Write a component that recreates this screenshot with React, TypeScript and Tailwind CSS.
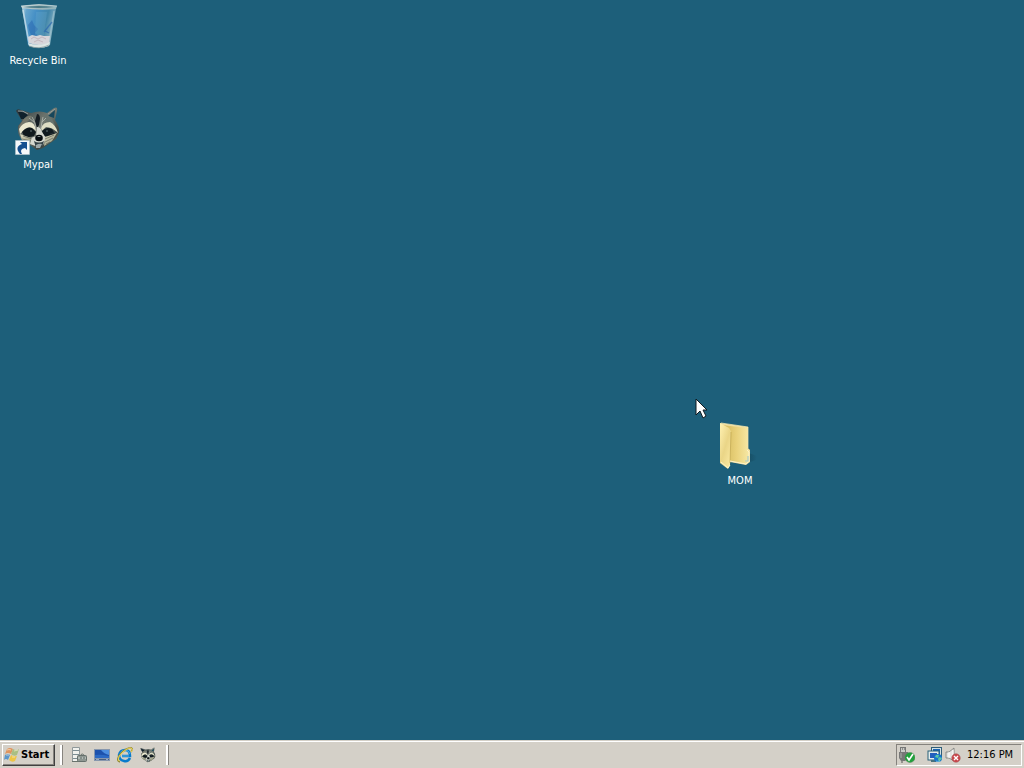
import React from "react";

function RecycleBinIcon() {
  return (
    <svg width="48" height="48" viewBox="0 0 48 48" aria-hidden="true">
      <defs>
        <linearGradient id="bin-glass" x1="0" x2="1" y1="0" y2="0.3">
          <stop offset="0" stopColor="#b9d6df" />
          <stop offset="0.14" stopColor="#65a5cd" />
          <stop offset="0.4" stopColor="#4690c6" />
          <stop offset="0.75" stopColor="#4186aa" />
          <stop offset="1" stopColor="#8ab4c2" />
        </linearGradient>
        <linearGradient id="bin-rim" x1="0" x2="1">
          <stop offset="0" stopColor="#c5d5d8" />
          <stop offset="0.5" stopColor="#9fb5b8" />
          <stop offset="1" stopColor="#8fb4bc" />
        </linearGradient>
      </defs>
      <path d="M8 4 L42 4 L36 41 Q25 46 14 41Z" fill="url(#bin-glass)" />
      <path d="M9 6 L15 39" stroke="#d8e8ec" strokeWidth="1.6" opacity=".7" />
      <path d="M40 7 L35 38" stroke="#b4d0d8" strokeWidth="1.3" opacity=".5" />
      <path d="M14 21 L18 16 L20 21 L24 25 L21 29 L25 32 L17 31 L15 26Z" fill="#235fae" opacity=".45" />
      <path d="M30 28 L38 18 M31 27 L35 29" stroke="#235fae" strokeWidth="1.3" opacity=".6" />
      <path d="M22 8 L33 8 L30 31 L21 31Z" fill="#8bc6e5" opacity=".15" />
      <path d="M14 33 L18 31 L22 32 L26 31 L30 32 L36 32 L35 39 Q25 43 15 39Z" fill="#d6d5da" />
      <path d="M17 35 L20 33 L24 35 L28 33 L32 35 M20 38 L24 36 L29 38" stroke="#bba9b1" strokeWidth=".7" fill="none" />
      <path d="M14 39 Q25 43 36 38 L35 42 Q25 46 15 42Z" fill="#dde6e4" />
      <path d="M15 42 Q25 46 35 41" stroke="#80979b" strokeWidth=".8" fill="none" />
      <path d="M7 2 Q25 -1 43 2 L42 5 Q25 7 8 4Z" fill="url(#bin-rim)" />
      <path d="M9 3 Q25 1 40 3 Q25 5 9 3Z" fill="#4a7b88" />
      <path d="M7 2 Q25 -1 43 2" stroke="#d1dfdf" strokeWidth=".7" fill="none" />
    </svg>
  );
}

function RaccoonIcon({ small = false }: { small?: boolean }) {
  return (
    <svg
      className={small ? "size-4" : "size-12 overflow-visible"}
      viewBox={small ? "2 1 44 46" : "0 0 48 48"}
      aria-hidden="true"
    >
      <defs>
        <linearGradient id="raccoon-coat" x2="1" y2="1">
          <stop stopColor="#2a353b" />
          <stop offset=".48" stopColor="#747b73" />
          <stop offset=".75" stopColor="#3b4542" />
          <stop offset="1" stopColor="#777a65" />
        </linearGradient>
        <linearGradient id="raccoon-cheek" x2=".8" y2="1">
          <stop stopColor="#e5e2c6" />
          <stop offset="1" stopColor="#8d8f75" />
        </linearGradient>
      </defs>
      <path d="M2 6 Q3 3 7 5 L17 8 Q26 5 33 8 L40 3 Q44 1 43 6 L41 15 Q46 22 45 28 L42 34 L35 39 L29 43 L23 45 L16 40 L8 35 Q3 29 4 21 L8 16Z" fill="url(#raccoon-coat)" />
      <path d="M4 7 Q8 6 14 10 L10 14 L7 14Z" fill="#10212c" />
      <path d="M41 5 L40 13 L34 11Z" fill="#17465b" />
      <path d="M4 6 Q9 5 14 9 M34 9 L41 4" stroke="#9aa3a0" strokeWidth=".9" fill="none" />
      <path d="M9 15 Q13 10 18 11 Q16 15 11 19 L6 26 L5 21Z" fill="#74776b" />
      <path d="M32 9 L38 14 L41 20 L35 17 L29 14Z" fill="#67736e" />
      <path d="M5 24 Q8 18 15 17 Q21 17 22 26 Q17 20 11 24 L6 29Z" fill="#eae8cf" />
      <path d="M27 23 Q29 17 36 17 Q42 20 44 28 Q38 22 32 22 L28 26Z" fill="#deddc4" />
      <path d="M23 9 Q26 9 26 14 L25 20 L23 23 L21 16Z" fill="#151d23" />
      <path d="M18 12 Q21 16 22 23 M29 12 Q28 16 27 23 M15 13 L20 17 M32 13 L28 17" stroke="#b7bbb2" strokeWidth=".8" fill="none" />
      <path d="M8 27 Q13 21 18 23 L22 27 L20 31 Q15 33 10 31Z" fill="#10191d" />
      <path d="M28 26 Q32 21 38 24 L41 29 L36 32 L30 31Z" fill="#111b20" />
      <path d="M23 22 Q27 22 28 27 L32 33 L29 40 L24 42 L16 39 L17 33 L22 31Z" fill="#d5d8cf" />
      <path d="M6 29 L17 33 L16 39 L8 35Z" fill="url(#raccoon-cheek)" />
      <path d="M31 32 L43 28 L38 36 L30 41Z" fill="url(#raccoon-cheek)" />
      <ellipse cx="25" cy="33" rx="3.8" ry="3.2" fill="#060c10" />
      <path d="M20 36 Q25 39 30 36 L28 42 L22 43Z" fill="#344044" />
      <path d="M22 40 Q25 38 28 39 L26 43 L22 43Z" fill="#9da8a8" />
      <circle cx="17" cy="26" r=".8" fill="#748486" />
      <circle cx="33" cy="26" r=".8" fill="#748486" />
      <ellipse cx="25" cy="31.5" rx="1.7" ry=".6" fill="#87908c" />
      <path d="M9 31 L18 34 M8 34 L17 36 M31 34 L40 30 M31 37 L39 33 M32 39 L36 37 M36 29 L43 27" stroke="#3a4142" strokeWidth=".5" />
      {!small && (
        <g>
          <path d="M1.5 35.5 H15.5 V49.5 H1.5Z" fill="#f5f8fa" stroke="#b2c2cb" strokeWidth=".6" />
          <path d="M6 49 Q0 42 8 39 L6 37 H13 V45 L11 43 Q5 44 8 49Z" fill="#164f8f" />
        </g>
      )}
    </svg>
  );
}

function FolderIcon() {
  return (
    <svg width="48" height="48" viewBox="0 0 48 48" aria-hidden="true">
      <defs>
        <linearGradient id="folder-back">
          <stop stopColor="#cfb657" />
          <stop offset=".55" stopColor="#ead27c" />
          <stop offset="1" stopColor="#f6e8a5" />
        </linearGradient>
        <linearGradient id="folder-front" x2=".8" y2="1">
          <stop stopColor="#fff2b3" />
          <stop offset=".55" stopColor="#ead587" />
          <stop offset="1" stopColor="#fae8a0" />
        </linearGradient>
        <linearGradient id="folder-shade">
          <stop stopColor="#0c3544" stopOpacity=".6" />
          <stop offset="1" stopColor="#0c3544" stopOpacity="0" />
        </linearGradient>
      </defs>
      <path d="M34 30 L45 34 L44 38 L32 42Z" fill="url(#folder-shade)" />
      <path d="M8 1 L36 5 V26 L38 28 V40 L34 43 L18 40Z" fill="#efdda0" />
      <path d="M10 3 L35 6 V26 L37 29 V39 L33 42 L18 39Z" fill="url(#folder-back)" />
      <path d="M9 1 L36 5 V26" stroke="#fff0b1" strokeWidth=".7" fill="none" />
      <path d="M8 1 L17 6 Q19 8 19 12 L18 43 L16 47 L8 41Z" fill="url(#folder-front)" />
      <path d="M19 10 L18 41" stroke="#b99e45" opacity=".6" />
      <path d="M9 40 L16 46 L18 43" stroke="#fff6cc" fill="none" />
      <path d="M35 28 L37 30 V39 L34 42 L18 39" stroke="#fff3c8" fill="none" />
      <path d="M33 39 H36 V34" stroke="#a9cbc7" strokeWidth="1.2" fill="none" />
    </svg>
  );
}

function WindowsIcon() {
  return (
    <svg width="16" height="16" viewBox="0 0 16 16" aria-hidden="true">
      <path d="M3 2 Q6 0 9 2 L7 7 Q4 5 1 7Z" fill="#df955f" />
      <path d="M9 2 Q12 4 15 2 L13 8 Q10 10 7 7Z" fill="#a9bf83" />
      <path d="M1 8 Q4 6 6 8 L4 13 Q2 11 0 13Z" fill="#5b96ca" />
      <path d="M7 8 Q10 10 13 9 L11 14 Q8 16 5 13Z" fill="#edc546" />
      <path d="M3 3 Q5 2 7 3 M10 4 L14 3 M2 8 L5 8 M8 10 L11 10" stroke="#fff4d5" opacity=".6" fill="none" />
    </svg>
  );
}

function ServerIcon() {
  return (
    <svg width="16" height="16" viewBox="0 0 16 16" aria-hidden="true">
      <path d="M1.5 .5 H8.5 V14.5 H1.5Z" fill="#f0f1ed" stroke="#90999a" />
      <path d="M2 3.5 H8 M2 7.5 H8 M2 11.5 H8" stroke="#7c8d92" />
      <path d="M1 14.5 H10" stroke="#69736d" />
      <path d="M9 9 Q11 5 14 9" stroke="#69736d" fill="none" />
      <rect x="6.5" y="8.5" width="9" height="6" rx="1" fill="#8e9792" stroke="#66706c" />
      <path d="M7 11 H15" stroke="#d6ddda" />
      <path d="M10 10 V12 M13 10 V12" stroke="#59645f" />
    </svg>
  );
}

function DesktopIcon() {
  return (
    <svg width="16" height="16" viewBox="0 0 16 16" aria-hidden="true">
      <path d="M0 2 H16 V14 H0Z" fill="#8797ae" />
      <rect x="1" y="3" width="14" height="8" fill="#1d52ad" />
      <path d="M7 3 H15 V8 Q10 7 7 3Z" fill="#4c8ee0" />
      <path d="M1 8 Q7 7 15 9 V11 H1Z" fill="#2b69c4" />
      <path d="M1 12.5 H15" stroke="#4a5f80" />
      <path d="M2 12.5 H5 M12 12.5 H14" stroke="#b8cce2" strokeWidth=".7" />
    </svg>
  );
}

function ExplorerIcon() {
  return (
    <svg width="16" height="16" viewBox="0 0 16 16" aria-hidden="true">
      <path d="M13 11 Q11 15 7 14 Q2 13 2 8 Q3 3 8 3 Q13 3 13 9 H5" fill="none" stroke="#087bcc" strokeWidth="2.5" />
      <path d="M3 7 Q5 2 9 3 Q12 4 13 7 M5 9 H12" fill="none" stroke="#75ccef" strokeWidth=".7" />
      <path d="M3 15 Q-1 14 2 9 Q6 3 12 1 Q17 0 14 5" fill="none" stroke="#958d38" strokeWidth="1.6" />
      <path d="M2 14 Q0 10 6 5 Q13 -1 15 2 Q16 3 14 5" fill="none" stroke="#f4d957" strokeWidth="1" />
    </svg>
  );
}

function SafelyRemoveIcon() {
  return (
    <svg width="16" height="16" viewBox="0 0 16 16" aria-hidden="true">
      <path d="M1 0 H7 V5 H9 V11 L6 14 H2 L0 11 V5 H1Z" fill="#777" />
      <path d="M2 1 H6 V5 H2Z" fill="#c9cac6" />
      <path d="M3 2 H4 M5 2 H6 M3 14 V16" stroke="#555" />
      <path d="M2 6 V11" stroke="#adafab" />
      <circle cx="11" cy="10.5" r="5" fill="#20a13b" stroke="#58835c" strokeWidth=".5" />
      <path d="M8 10 L10 13 L14 7" stroke="white" strokeWidth="1.6" fill="none" />
    </svg>
  );
}

function NetworkIcon() {
  return (
    <svg width="16" height="16" viewBox="0 0 16 16" aria-hidden="true">
      <rect x="4.5" y=".5" width="10" height="9" fill="#d5e2e4" stroke="#315e78" />
      <rect x="6" y="2" width="7" height="6" fill="#1c64b4" />
      <rect x="1" y="4" width="11" height="9" fill="#e5eceb" stroke="#286078" />
      <rect x="3" y="6" width="7" height="5" fill="#245fbc" />
      <path d="M4 14 H9" stroke="#47717d" strokeWidth="2" />
      <circle cx="11" cy="11" r="4" fill="#1776cb" />
      <path d="M9 8 L12 8 L11 11 L8 10Z M12 10 L15 11 L12 15 L11 12Z" fill="#5dc5a4" />
      <path d="M9 14 Q11 15 13 14" stroke="#8ed2eb" strokeWidth=".6" fill="none" />
    </svg>
  );
}

function SpeakerIcon() {
  return (
    <svg width="16" height="16" viewBox="0 0 16 16" aria-hidden="true">
      <path d="M1 5 H4 L9 1 V14 L4 11 H1Z" fill="#e4e5e2" stroke="#777876" strokeWidth=".8" />
      <path d="M4 5 V11 M8 3 V13" stroke="#fff" />
      <circle cx="11" cy="11" r="4.3" fill="#c9464b" stroke="#a46163" strokeWidth=".5" />
      <path d="M9 9 L13 13 M13 9 L9 13" stroke="#fff" strokeWidth="1.4" />
    </svg>
  );
}

const labelClass = "text-[11px] leading-4 whitespace-nowrap";
const separatorClass = "h-5 w-[3px] border-l-2 border-white bg-[#87847f]";

export default function App() {
  return (
    <div className="flex min-h-screen flex-col bg-[#1d5f7a] font-['DejaVu_Sans_Condensed','DejaVu_Sans',sans-serif]">
      <main className="relative flex-1 overflow-hidden text-white">
        <div className="flex w-[76px] flex-col gap-9 pt-1">
          <button className="flex flex-col items-center gap-px">
            <RecycleBinIcon />
            <span className={labelClass}>Recycle Bin</span>
          </button>
          <button className="flex flex-col items-center gap-1">
            <RaccoonIcon />
            <span className={labelClass}>Mypal</span>
          </button>
        </div>
        <button className="absolute left-[712px] top-[422px] flex w-14 flex-col items-start gap-[3px]">
          <FolderIcon />
          <span className={`${labelClass} w-full text-center`}>MOM</span>
        </button>
        <svg className="pointer-events-none absolute left-[695px] top-[398px]" width="13" height="21" viewBox="0 0 13 21" aria-hidden="true">
          <path d="M1 1 V17 L5 13 L8 20 L11 18 L8 12 H12Z" fill="white" stroke="#111a20" />
        </svg>
      </main>
      <footer className="flex h-7 items-center border-t border-[#d4d0c8] bg-[#d4d0c8] px-0.5 shadow-[inset_0_1px_white]">
        <button className="flex h-[22px] w-[53px] items-center border border-b-[#404040] border-l-white border-r-[#404040] border-t-white pl-px shadow-[inset_-1px_-1px_#85827d]">
          <WindowsIcon />
          <span className={`${labelClass} pl-px font-bold`}>Start</span>
        </button>
        <nav className="flex items-center pl-[5px]" aria-label="Quick Launch">
          <span className={separatorClass} />
          <div className="flex items-center gap-[7px] pl-2">
            <button aria-label="Server Manager"><ServerIcon /></button>
            <button aria-label="Show Desktop"><DesktopIcon /></button>
            <button aria-label="Internet Explorer"><ExplorerIcon /></button>
            <button aria-label="Mypal"><RaccoonIcon small /></button>
          </div>
          <span className={`${separatorClass} ml-2.5`} />
        </nav>
        <div className="ml-auto flex h-[22px] w-[126px] items-center border border-b-white border-l-[#85827d] border-r-white border-t-[#85827d] pl-0.5">
          <button aria-label="Safely Remove Hardware"><SafelyRemoveIcon /></button>
          <button className="ml-3" aria-label="Network"><NetworkIcon /></button>
          <button className="ml-0.5" aria-label="Volume"><SpeakerIcon /></button>
          <time className={`${labelClass} ml-1.5`}>12:16 PM</time>
        </div>
      </footer>
    </div>
  );
}
